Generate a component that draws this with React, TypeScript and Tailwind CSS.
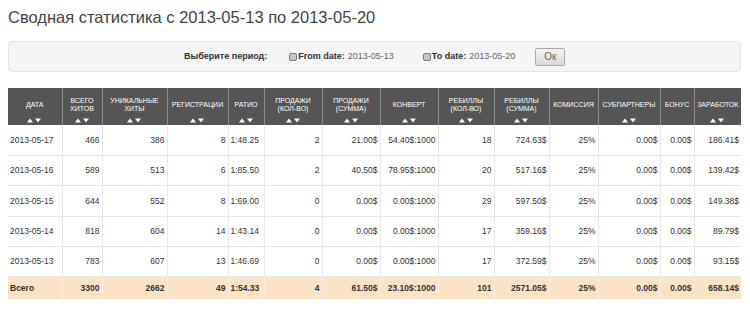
type Row = {
  date: string;
  hits: string;
  uniq: string;
  reg: string;
  ratio: string;
  salesQty: string;
  salesSum: string;
  conv: string;
  rebQty: string;
  rebSum: string;
  comm: string;
  sub: string;
  bonus: string;
  earn: string;
};

const rows: Row[] = [
  { date: "2013-05-17", hits: "466", uniq: "386", reg: "8", ratio: "1:48.25", salesQty: "2", salesSum: "21.00$", conv: "54.40$:1000", rebQty: "18", rebSum: "724.63$", comm: "25%", sub: "0.00$", bonus: "0.00$", earn: "186.41$" },
  { date: "2013-05-16", hits: "589", uniq: "513", reg: "6", ratio: "1:85.50", salesQty: "2", salesSum: "40.50$", conv: "78.95$:1000", rebQty: "20", rebSum: "517.16$", comm: "25%", sub: "0.00$", bonus: "0.00$", earn: "139.42$" },
  { date: "2013-05-15", hits: "644", uniq: "552", reg: "8", ratio: "1:69.00", salesQty: "0", salesSum: "0.00$", conv: "0.00$:1000", rebQty: "29", rebSum: "597.50$", comm: "25%", sub: "0.00$", bonus: "0.00$", earn: "149.38$" },
  { date: "2013-05-14", hits: "818", uniq: "604", reg: "14", ratio: "1:43.14", salesQty: "0", salesSum: "0.00$", conv: "0.00$:1000", rebQty: "17", rebSum: "359.16$", comm: "25%", sub: "0.00$", bonus: "0.00$", earn: "89.79$" },
  { date: "2013-05-13", hits: "783", uniq: "607", reg: "13", ratio: "1:46.69", salesQty: "0", salesSum: "0.00$", conv: "0.00$:1000", rebQty: "17", rebSum: "372.59$", comm: "25%", sub: "0.00$", bonus: "0.00$", earn: "93.15$" },
];

const total: Row = {
  date: "Всего", hits: "3300", uniq: "2662", reg: "49", ratio: "1:54.33", salesQty: "4", salesSum: "61.50$", conv: "23.10$:1000", rebQty: "101", rebSum: "2571.05$", comm: "25%", sub: "0.00$", bonus: "0.00$", earn: "658.14$",
};

const cols: { key: keyof Row; title: string[]; w: string; sort: boolean; left?: boolean }[] = [
  { key: "date", title: ["ДАТА"], w: "w-[54px]", sort: true, left: true },
  { key: "hits", title: ["ВСЕГО", "ХИТОВ"], w: "w-[40px]", sort: true },
  { key: "uniq", title: ["УНИКАЛЬНЫЕ", "ХИТЫ"], w: "w-[65px]", sort: true },
  { key: "reg", title: ["РЕГИСТРАЦИИ"], w: "w-[61px]", sort: true },
  { key: "ratio", title: ["РАТИО"], w: "w-[36px]", sort: true, left: true },
  { key: "salesQty", title: ["ПРОДАЖИ", "(КОЛ-ВО)"], w: "w-[58px]", sort: true },
  { key: "salesSum", title: ["ПРОДАЖИ", "(СУММА)"], w: "w-[58px]", sort: true },
  { key: "conv", title: ["КОНВЕРТ"], w: "w-[58px]", sort: true },
  { key: "rebQty", title: ["РЕБИЛЛЫ", "(КОЛ-ВО)"], w: "w-[56px]", sort: true },
  { key: "rebSum", title: ["РЕБИЛЛЫ", "(СУММА)"], w: "w-[55px]", sort: true },
  { key: "comm", title: ["КОМИССИЯ"], w: "w-[49px]", sort: false },
  { key: "sub", title: ["СУБПАРТНЕРЫ"], w: "w-[62px]", sort: true },
  { key: "bonus", title: ["БОНУС"], w: "w-[34px]", sort: false },
  { key: "earn", title: ["ЗАРАБОТОК"], w: "w-[47px]", sort: true },
];

function SortArrows() {
  return (
    <svg width="15" height="5" viewBox="0 0 15 5" className="block">
      <path d="M0 4.5 L3 0.5 L6 4.5 Z" fill="#fff" />
      <path d="M8 0.5 L14 0.5 L11 4.5 Z" fill="#fff" />
    </svg>
  );
}

function Checkbox() {
  return <span className="inline-block h-[8px] w-[8px] rounded-[2px] border border-[#7a7a7a] bg-[#c9c9c9]" />;
}

export default function App() {
  return (
    <div className="h-[311px] w-[750px] overflow-hidden bg-white px-[8px] pt-[6px] font-['Liberation_Sans',Arial,sans-serif] text-[#333]">
      <h1 className="text-[16.5px] leading-[22px] text-[#444]">Сводная статистика с 2013-05-13 по 2013-05-20</h1>

      <div className="mt-[13px] flex h-[31px] w-[733px] items-center rounded-[4px] border border-[#e3e3e3] bg-[#f5f5f5] pl-[175px] text-[9px]">
        <span className="font-bold text-[#333]">Выберите период:</span>
        <span className="ml-[22px] flex items-center gap-[1px]">
          <Checkbox />
          <b className="text-[#333]">From date:</b>
          <span className="ml-[2px] text-[#666]">2013-05-13</span>
        </span>
        <span className="ml-[29px] flex items-center gap-[1px]">
          <Checkbox />
          <b className="text-[#333]">To date:</b>
          <span className="ml-[2px] text-[#666]">2013-05-20</span>
        </span>
        <button
          type="button"
          className="ml-[20px] h-[18px] w-[30px] rounded-[2px] border border-[#a9a9a9] bg-gradient-to-b from-[#f4f4f4] to-[#d9d9d9] text-[10px] leading-none text-[#666]"
        >
          Ок
        </button>
      </div>

      <table className="mt-[16px] w-[733px] table-fixed border-collapse">
        <colgroup>
          {cols.map((c) => (
            <col key={c.key} className={c.w} />
          ))}
        </colgroup>
        <thead>
          <tr className="h-[37px] bg-[#555]">
            {cols.map((c) => (
              <th key={c.key} className="border-x border-[#8c8c8c] p-0 align-top font-normal first:border-l-0 last:border-r-0">
                <div className="flex h-[37px] flex-col items-center">
                  <div className="flex flex-1 flex-col items-center justify-center pt-[4px] text-[7px] leading-[8px] text-white">
                    {c.title.map((t) => (
                      <span key={t}>{t}</span>
                    ))}
                  </div>
                  <div className="flex h-[7px] items-start">{c.sort && <SortArrows />}</div>
                </div>
              </th>
            ))}
          </tr>
        </thead>
        <tbody className="text-[8.5px]">
          {rows.map((r) => (
            <tr key={r.date} className="h-[30.4px] border-b border-[#e8e8e8]">
              {cols.map((c) => (
                <td
                  key={c.key}
                  className={`border-x border-[#e8e8e8] px-[2px] first:border-l-0 last:border-r-0 ${c.left ? "text-left" : "text-right"}`}
                >
                  {r[c.key]}
                </td>
              ))}
            </tr>
          ))}
          <tr className="h-[22px] bg-[#fde3c6] font-bold">
            {cols.map((c) => (
              <td
                key={c.key}
                className={`border-x border-[#f7ecdf] px-[2px] first:border-l-0 last:border-r-0 ${c.left ? "text-left" : "text-right"}`}
              >
                {total[c.key]}
              </td>
            ))}
          </tr>
        </tbody>
      </table>
    </div>
  );
}
